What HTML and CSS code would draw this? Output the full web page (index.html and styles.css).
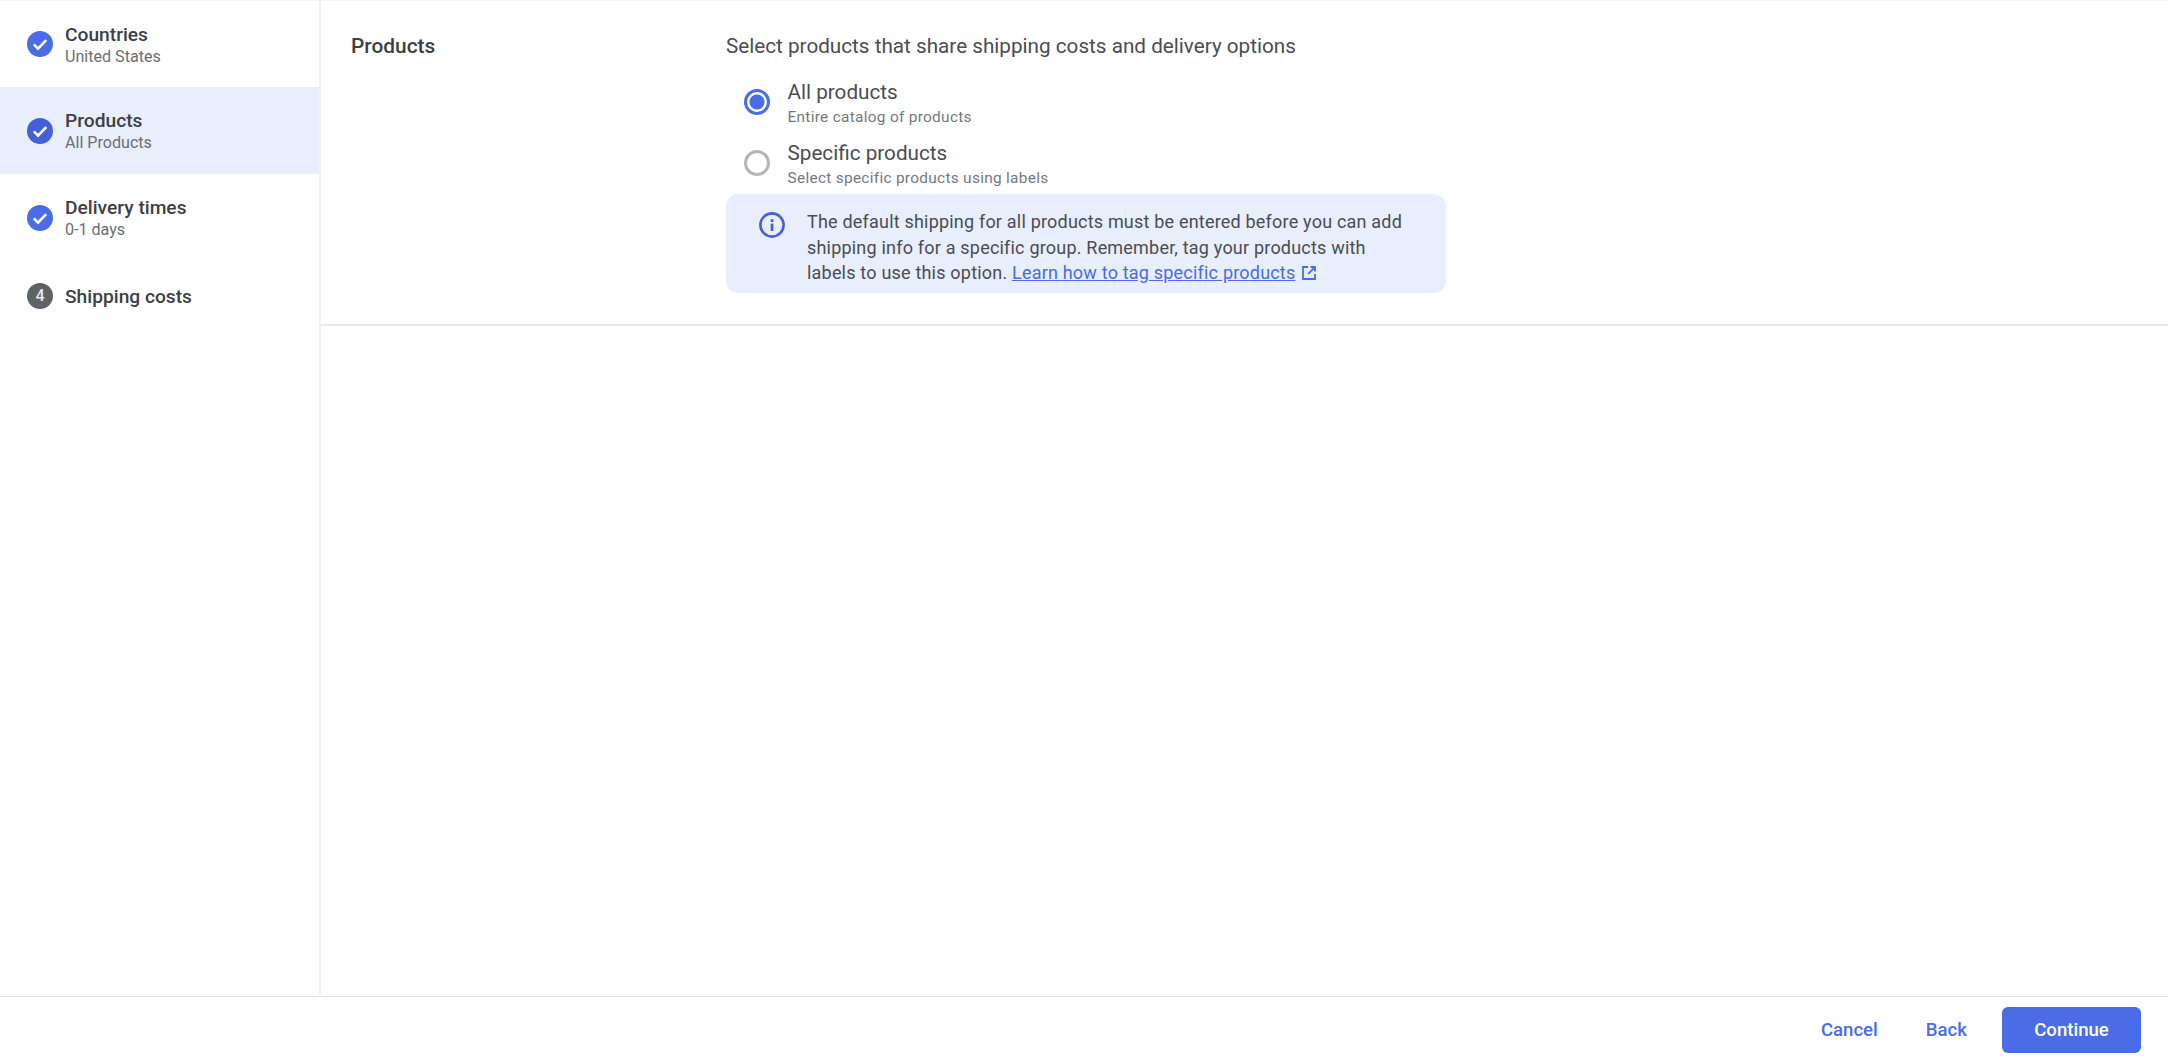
FILE: index.html
```html
<!DOCTYPE html>
<html lang="en">
<head>
    <meta charset="UTF-8">
    <title>Shipping service</title>
    <link rel="stylesheet" href="styles.css">
</head>
<body>
    <div class="page">
        <nav class="steps">
            <div class="step first">
                <svg class="step-icon" viewBox="0 0 26 26"><circle cx="13" cy="13" r="13" fill="#4a6ce6"/><path d="M6.8 13.4l4.2 4.2 8.2-8.4" fill="none" stroke="#fff" stroke-width="2.5"/></svg>
                <div>
                    <div class="step-name">Countries</div>
                    <div class="step-sub">United States</div>
                </div>
            </div>
            <div class="step active">
                <svg class="step-icon" viewBox="0 0 26 26"><circle cx="13" cy="13" r="13" fill="#4560d4"/><path d="M6.8 13.4l4.2 4.2 8.2-8.4" fill="none" stroke="#fff" stroke-width="2.5"/></svg>
                <div>
                    <div class="step-name">Products</div>
                    <div class="step-sub">All Products</div>
                </div>
            </div>
            <div class="step">
                <svg class="step-icon" viewBox="0 0 26 26"><circle cx="13" cy="13" r="13" fill="#4a6ce6"/><path d="M6.8 13.4l4.2 4.2 8.2-8.4" fill="none" stroke="#fff" stroke-width="2.5"/></svg>
                <div>
                    <div class="step-name">Delivery times</div>
                    <div class="step-sub">0-1 days</div>
                </div>
            </div>
            <div class="step last">
                <span class="step-num">4</span>
                <div class="step-name">Shipping costs</div>
            </div>
        </nav>

        <main class="content">
            <section class="panel">
                <h2 class="panel-title">Products</h2>
                <div class="panel-body">
                    <p class="lead">Select products that share shipping costs and delivery options</p>
                    <div class="option">
                        <span class="radio checked"></span>
                        <div>
                            <div class="option-name">All products</div>
                            <div class="option-sub">Entire catalog of products</div>
                        </div>
                    </div>
                    <div class="option">
                        <span class="radio"></span>
                        <div>
                            <div class="option-name">Specific products</div>
                            <div class="option-sub">Select specific products using labels</div>
                        </div>
                    </div>
                    <div class="notice">
                        <svg class="notice-icon" viewBox="0 0 26 26"><circle cx="13" cy="13" r="11.6" fill="none" stroke="#4560d4" stroke-width="2.6"/><rect x="11.7" y="11.6" width="2.7" height="7.4" fill="#4560d4"/><rect x="11.7" y="7.2" width="2.7" height="2.8" fill="#4560d4"/></svg>
                        <p>The default shipping for all products must be entered before you can add shipping info for a specific group. Remember, tag your products with labels to use this option. <a href="#">Learn how to tag specific products</a><svg class="ext" viewBox="0 0 16 16"><path d="M7 2H2v12h12V9M9.5 2H14v4.5M13.8 2.2L7.2 8.8" fill="none" stroke="#4a6ce6" stroke-width="1.8"/></svg></p>
                    </div>
                </div>
            </section>
        </main>
    </div>

    <footer class="actions">
        <button class="link-btn">Cancel</button>
        <button class="link-btn">Back</button>
        <button class="primary-btn">Continue</button>
    </footer>
</body>
</html>
```
FILE: styles.css
```css
* {
    box-sizing: border-box;
}

body {
    margin: 0;
    height: 1060px;
    overflow: hidden;
    background-color: #fff;
    font-family: Roboto, "Liberation Sans", sans-serif;
    color: #4a4d51;
    display: flex;
    flex-direction: column;
}

.page {
    height: 997px;
    display: flex;
    border-top: 1px solid #f1f3f4;
    border-bottom: 1px solid #e3e4e8;
}

/* sidebar */
.steps {
    width: 321px;
    flex: none;
    border-right: 2px solid #f1f2f5;
}

.step {
    height: 87px;
    padding-left: 27px;
    display: flex;
    align-items: center;
    gap: 12px;
}

.step.first {
    height: 86px;
}

.step.active {
    background-color: #e8eefc;
}

.step.last {
    height: 70px;
}

.step-icon {
    width: 26px;
    height: 26px;
    flex: none;
}

.step-num {
    width: 26px;
    height: 26px;
    flex: none;
    border-radius: 50%;
    background-color: #5f6368;
    color: #e8eaed;
    font-size: 16px;
    font-weight: 500;
    line-height: 26px;
    text-align: center;
}

.step-name {
    font-size: 19.2px;
    font-weight: 500;
    line-height: 25px;
    color: #3c4043;
}

.step-sub {
    font-size: 16.1px;
    line-height: 20px;
    color: #6b6e73;
}

/* main panel */
.content {
    flex: 1;
}

.panel {
    height: 325px;
    display: flex;
    border-bottom: 2px solid #e8e9ec;
}

.panel-title {
    width: 405px;
    margin: 0;
    padding: 32px 0 0 30px;
    font-size: 20.9px;
    font-weight: 500;
    line-height: 26px;
    color: #3c4043;
}

.panel-body {
    width: 720px;
    padding-top: 32px;
}

.lead {
    margin: 0 0 19px;
    font-size: 20.7px;
    line-height: 26px;
}

.option {
    height: 50px;
    padding-left: 18px;
    display: flex;
    align-items: flex-start;
    gap: 17.5px;
}

.option + .option {
    margin-top: 11px;
}

.option-name {
    font-size: 20.7px;
    line-height: 28px;
}

.option-sub {
    font-size: 15.4px;
    line-height: 22px;
    letter-spacing: .3px;
    color: #75797e;
}

.radio {
    width: 26px;
    height: 26px;
    flex: none;
    margin-top: 11px;
    border: 3px solid #b4b6ba;
    border-radius: 50%;
}

.radio.checked {
    border-color: #4a6ce6;
    background: radial-gradient(circle, #4a6ce6 0 7px, transparent 8px);
}

.notice {
    height: 99px;
    margin-top: 5px;
    padding: 15px 40px 0 33px;
    display: flex;
    gap: 22px;
    background-color: #e8eefc;
    border-radius: 12px;
}

.notice-icon {
    width: 26px;
    height: 26px;
    flex: none;
    margin-top: 3px;
}

.notice p {
    margin: 0;
    font-size: 18px;
    line-height: 25.5px;
    letter-spacing: .2px;
}

.notice a {
    color: #4a6ce6;
}

.ext {
    width: 16px;
    height: 16px;
    margin-left: 6px;
    vertical-align: -2px;
}

/* footer */
.actions {
    flex: 1;
    padding: 10px 27px 0 0;
    display: flex;
    align-items: flex-start;
    justify-content: flex-end;
}

.actions button {
    height: 46px;
    border: 0;
    font-family: Roboto, "Liberation Sans", sans-serif;
    font-size: 18.6px;
    font-weight: 500;
}

.link-btn {
    margin-right: 48px;
    padding: 0;
    background: none;
    color: #4a6ce6;
}

.actions .link-btn:nth-child(2) {
    margin-right: 35px;
}

.primary-btn {
    width: 139px;
    background-color: #4a6ce6;
    border-radius: 6px;
    color: #fff;
}
```
